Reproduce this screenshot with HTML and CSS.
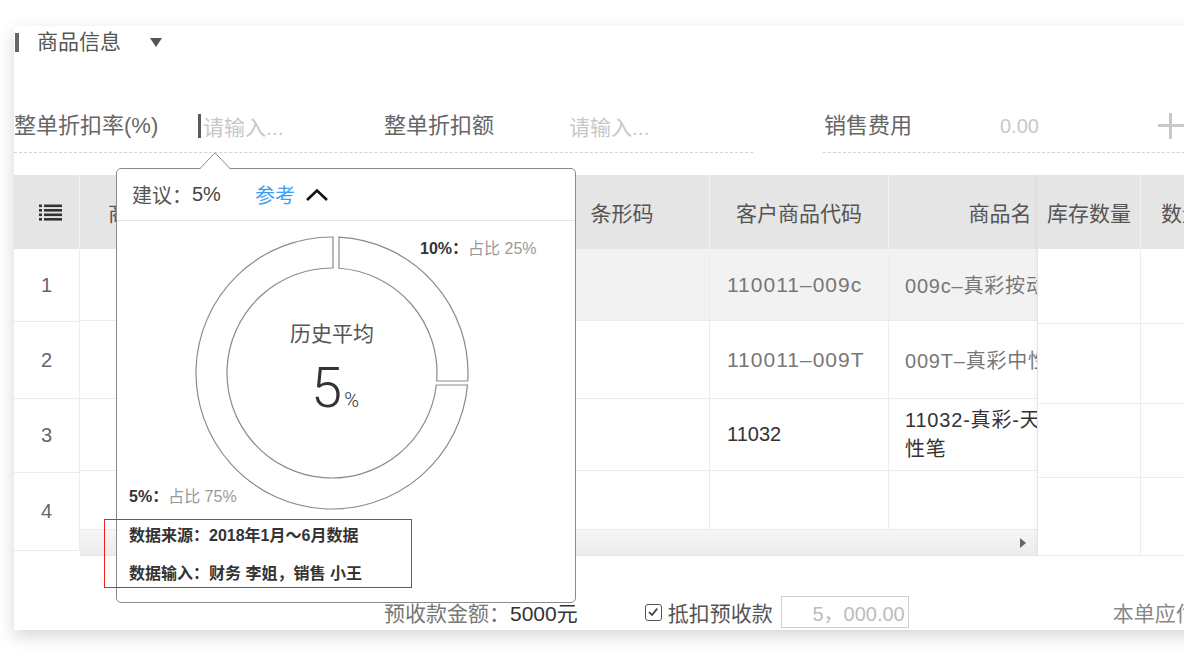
FILE: index.html
```html
<!DOCTYPE html>
<html lang="zh-CN">
<head>
<meta charset="utf-8">
<title>商品信息</title>
<link rel="stylesheet" href="styles.css">
</head>
<body>
<div class="page">
  <div class="card">
    <div class="sec-title">
      <span class="bar"></span>
      <span class="title-text">商品信息</span>
      <span class="caret"></span>
    </div>

    <div class="form-row">
      <div class="fgroup g1">
        <span class="flabel l1">整单折扣率(%)</span>
        <span class="finput i1"><span class="cursor"></span><span class="ph">请输入...</span></span>
        <span class="flabel l2">整单折扣额</span>
        <span class="finput"><span class="ph">请输入...</span></span>
      </div>
      <div class="fgroup g2">
        <span class="flabel l3">销售费用</span>
        <span class="fvalue">0.00</span>
        <span class="plus"></span>
      </div>
    </div>

    <div class="table">
      <div class="tleft">
        <div class="hcell icon-cell">
          <svg width="23" height="17" viewBox="0 0 23 17">
            <g fill="#333">
              <rect x="0" y="0.5" width="3" height="2.6"/><rect x="5" y="0.5" width="18" height="2.6"/>
              <rect x="0" y="5" width="3" height="2.6"/><rect x="5" y="5" width="18" height="2.6"/>
              <rect x="0" y="9.5" width="3" height="2.6"/><rect x="5" y="9.5" width="18" height="2.6"/>
              <rect x="0" y="14" width="3" height="2.6"/><rect x="5" y="14" width="18" height="2.6"/>
            </g>
          </svg>
        </div>
        <div class="ncell r1">1</div>
        <div class="ncell r2">2</div>
        <div class="ncell r3">3</div>
        <div class="ncell r4">4</div>
      </div>

      <div class="tmid">
        <div class="mgrid">
          <div class="hcell left">商品编码</div>
          <div class="hcell">条形码</div>
          <div class="hcell">客户商品代码</div>
          <div class="hcell">商品名</div>
          <div class="hcell">规格</div>

          <div class="cell"></div>
          <div class="cell hover"></div>
          <div class="cell hover code">110011–009c</div>
          <div class="cell hover name nowrap">009c–真彩按动中性笔</div>
          <div class="cell hover"></div>

          <div class="cell"></div>
          <div class="cell"></div>
          <div class="cell code">110011–009T</div>
          <div class="cell name nowrap">009T–真彩中性笔</div>
          <div class="cell"></div>

          <div class="cell"></div>
          <div class="cell"></div>
          <div class="cell dark">11032</div>
          <div class="cell name dark wrap">11032-真彩-天卓越中性笔</div>
          <div class="cell"></div>

          <div class="cell"></div>
          <div class="cell"></div>
          <div class="cell"></div>
          <div class="cell"></div>
          <div class="cell"></div>
        </div>
        <div class="hscroll"><span class="harrow"></span></div>
      </div>

      <div class="tright">
        <div class="hcell">库存数量</div>
        <div class="hcell left2">数量</div>
        <div class="cell"></div><div class="cell"></div>
        <div class="cell"></div><div class="cell"></div>
        <div class="cell"></div><div class="cell"></div>
        <div class="cell"></div><div class="cell"></div>
      </div>
    </div>

    <div class="footer">
      <span class="f-label">预收款金额：</span><span class="f-value">5000元</span>
      <span class="check">
        <svg width="12" height="12" viewBox="0 0 12 12"><path d="M2 6.2 L5 9 L10.2 2.6" fill="none" stroke="#444" stroke-width="1.8"/></svg>
      </span>
      <span class="f-check-label">抵扣预收款</span>
      <span class="f-input">5，000.00</span>
      <span class="f-label f-due">本单应付款：</span>
    </div>

    <div class="popup">
      <svg class="pop-arrow" width="30" height="17" viewBox="0 0 30 17">
        <polygon points="0,17 15,1 30,17" fill="#fff"/>
        <polyline points="0,16.5 15,0.8 30,16.5" fill="none" stroke="#8a8a8a" stroke-width="1"/>
      </svg>
      <div class="pop-head">
        <span class="ph-label">建议：</span><span class="ph-val">5%</span>
        <span class="ph-link">参考</span>
        <svg class="chev" width="24" height="14" viewBox="0 0 24 14"><polyline points="2,12 12,2.5 22,12" fill="none" stroke="#111" stroke-width="2.6"/></svg>
      </div>
      <div class="chart">
        <svg class="ring" width="458" height="290" viewBox="0 0 458 290">
          <g fill="#fff" stroke="#8a8a8a" stroke-width="1.2">
            <path d="M222 16.18 A136 136 0 0 1 350.76 160 L319.69 160 A105 105 0 0 0 222 47.23 Z"/>
            <path d="M350.47 164 A136 136 0 1 1 216 16 L216 47 A105 105 0 1 0 319.31 164 Z"/>
          </g>
        </svg>
        <div class="center-text">
          <div class="ct-title">历史平均</div>
          <div class="ct-num"><span class="big">5</span><span class="pct">%</span></div>
        </div>
        <div class="legend lg1"><b>10%：</b><span>占比 25%</span></div>
        <div class="legend lg2"><b>5%：</b><span>占比 75%</span></div>
      </div>
      <div class="info">
        <div class="info-line">数据来源：2018年1月～6月数据</div>
        <div class="info-line">数据输入：财务 李姐，销售 小王</div>
      </div>
      <div class="mark"></div>
    </div>
  </div>
</div>
</body>
</html>
```

FILE: styles.css
```css
html, body {
  margin: 0;
  padding: 0;
}
body {
  width: 1184px;
  height: 655px;
  overflow: hidden;
  background: #fff;
  font-family: "Liberation Sans", "Noto Sans CJK SC", sans-serif;
  color: #555;
}
.page {
  padding: 26px 0 0 14px;
}
.card {
  position: relative;
  width: 1320px;
  background: #fff;
  box-shadow: 0 6px 16px rgba(0, 0, 0, 0.17);
  padding-bottom: 2px;
}

/* section title */
.sec-title {
  display: flex;
  align-items: center;
  height: 32px;
}
.bar {
  width: 4px;
  height: 19px;
  background: #666;
  margin-left: 1px;
}
.title-text {
  margin-left: 18px;
  font-size: 21px;
  color: #555;
  line-height: 24px;
}
.caret {
  margin-left: 29px;
  width: 0;
  height: 0;
  border-left: 6px solid transparent;
  border-right: 6px solid transparent;
  border-top: 9px solid #555;
}

/* form row */
.form-row {
  display: flex;
  margin-top: 42px;
}
.fgroup {
  display: flex;
  align-items: center;
  height: 52px;
  border-bottom: 1px dashed #cdd4df;
}
.g1 {
  width: 739px;
}
.g2 {
  margin-left: 70px;
  flex: 1;
}
.flabel {
  font-size: 22px;
  color: #666;
  line-height: 26px;
}
.l1 { width: 184px; }
.l2 { width: 185px; }
.l3 { width: 176px; padding-left: 1px; }
.finput {
  display: flex;
  align-items: center;
}
.i1 { width: 186px; }
.cursor {
  width: 3px;
  height: 24px;
  background: #5a5a5a;
  margin-right: 2px;
}
.ph {
  font-size: 21px;
  color: #c8c8c8;
}
.fvalue {
  width: 158px;
  font-size: 20px;
  color: #c8c8c8;
}
.plus {
  position: relative;
  width: 26px;
  height: 26px;
}
.plus::before,
.plus::after {
  content: "";
  position: absolute;
  background: #c8c8c8;
}
.plus::before {
  left: 0;
  right: 0;
  top: 11px;
  height: 3px;
}
.plus::after {
  top: 0;
  bottom: 0;
  left: 11px;
  width: 3px;
}

/* table */
.table {
  display: flex;
  margin-top: 22px;
  height: 381px;
}
.hcell {
  background: #e5e5e5;
  display: flex;
  align-items: center;
  justify-content: center;
  font-size: 21px;
  color: #555;
  border-right: 1px solid #f4f4f4;
  box-sizing: border-box;
  white-space: nowrap;
  overflow: hidden;
}
.hcell.icon-cell {
  justify-content: flex-start;
  padding-left: 25px;
}
.hcell.left {
  justify-content: flex-start;
  padding-left: 28px;
}
.hcell.left2 {
  justify-content: flex-start;
  padding-left: 20px;
}
.cell {
  box-sizing: border-box;
  border-right: 1px solid #ececec;
  border-bottom: 1px solid #ececec;
  display: flex;
  align-items: center;
  font-size: 20px;
  color: #777;
  overflow: hidden;
}
.tleft {
  width: 66px;
  display: grid;
  grid-template-rows: 74px 73px 77px 74px 78px;
  align-content: start;
}
.ncell {
  box-sizing: border-box;
  border-right: 1px solid #ececec;
  border-bottom: 1px solid #ececec;
  display: flex;
  align-items: center;
  justify-content: center;
  font-size: 20px;
  color: #666;
}
.tmid {
  width: 957px;
  overflow: hidden;
  display: flex;
  flex-direction: column;
}
.mgrid {
  display: grid;
  grid-template-columns: 455px 175px 179px 223px 150px;
  grid-template-rows: 74px 72px 78px 72px 59px;
  width: 1182px;
}
.hover {
  background: #f2f2f2;
}
.code {
  padding-left: 17px;
  font-size: 21px;
  letter-spacing: 1px;
  color: #777;
}
.name {
  padding-left: 16px;
  padding-right: 0;
  letter-spacing: 0.8px;
}
.nowrap {
  white-space: nowrap;
}
.wrap {
  line-height: 29px;
}
.dark {
  color: #333;
  padding-left: 17px;
}
.name.dark {
  padding-left: 16px;
}
.hscroll {
  height: 26px;
  width: 957px;
  background: linear-gradient(#f6f6f6, #ececec);
  border-bottom: 1px solid #e6e6e6;
  box-sizing: border-box;
  display: flex;
  align-items: center;
  justify-content: flex-end;
}
.harrow {
  width: 0;
  height: 0;
  border-top: 5px solid transparent;
  border-bottom: 5px solid transparent;
  border-left: 6px solid #666;
  margin-right: 11px;
}
.tright {
  flex: 1;
  display: grid;
  grid-template-columns: 103px 1fr;
  grid-template-rows: 74px 75px 80px 74px 78px;
  border-left: 1px solid #e4e4e4;
  box-shadow: -2px 0 4px rgba(0, 0, 0, 0.03);
}

/* footer */
.footer {
  display: flex;
  align-items: center;
  height: 32px;
  margin-top: 40px;
  padding-left: 370px;
  font-size: 21px;
}
.f-label {
  color: #777;
}
.f-value {
  color: #333;
}
.check {
  margin-left: 67px;
  width: 17px;
  height: 17px;
  box-sizing: border-box;
  border: 1.5px solid #555;
  border-radius: 3px;
  display: flex;
  align-items: center;
  justify-content: center;
}
.f-check-label {
  margin-left: 6px;
  color: #555;
}
.f-input {
  margin-left: 8px;
  width: 128px;
  height: 32px;
  box-sizing: border-box;
  border: 1px solid #cfcfcf;
  display: flex;
  align-items: center;
  justify-content: flex-end;
  padding-right: 3px;
  color: #bcbcbc;
  font-size: 20px;
}
.f-due {
  margin-left: 204px;
  color: #888;
}

/* popup */
.popup {
  position: absolute;
  left: 102px;
  top: 142px;
  width: 460px;
  height: 435px;
  box-sizing: border-box;
  border: 1px solid #8a8a8a;
  border-radius: 5px;
  background: #fff;
  z-index: 5;
}
.pop-arrow {
  position: absolute;
  left: 83px;
  top: -17px;
}
.pop-head {
  height: 51px;
  border-bottom: 1px solid #e3e3e3;
  display: flex;
  align-items: center;
  padding-left: 15px;
  font-size: 20px;
}
.ph-label {
  color: #555;
}
.ph-val {
  color: #444;
}
.ph-link {
  margin-left: 34px;
  color: #3d9ef2;
}
.chev {
  margin-left: 10px;
}
.chart {
  position: relative;
  height: 290px;
}
.ring {
  position: absolute;
  left: 0;
  top: 0;
}
.center-text {
  position: absolute;
  left: 115px;
  width: 200px;
  top: 99px;
  display: flex;
  flex-direction: column;
  align-items: center;
}
.ct-title {
  font-size: 21px;
  line-height: 24px;
  color: #555;
  font-family: "Noto Sans CJK SC", sans-serif;
}
.ct-num {
  margin-top: 16px;
  display: flex;
  align-items: baseline;
  font-family: Roboto, "Liberation Sans", sans-serif;
  font-weight: 300;
  color: #333;
  padding-left: 6px;
}
.big {
  font-size: 56px;
  line-height: 56px;
}
.pct {
  font-size: 20px;
  margin-left: 2px;
}
.legend {
  position: absolute;
  font-size: 16px;
  line-height: 20px;
  white-space: nowrap;
}
.legend b {
  color: #333;
  font-weight: 600;
}
.legend span {
  color: #999;
}
.lg1 {
  left: 303px;
  top: 18px;
}
.lg2 {
  left: 12px;
  top: 266px;
}
.info {
  margin-top: 6px;
  padding-left: 12px;
}
.info-line {
  height: 38px;
  line-height: 38px;
  font-size: 16px;
  font-weight: 600;
  color: #333;
  white-space: nowrap;
}
.mark {
  position: absolute;
  left: -13px;
  top: 350px;
  width: 308px;
  height: 69px;
  box-sizing: border-box;
  border: 1px solid #f2201c;
}
```
